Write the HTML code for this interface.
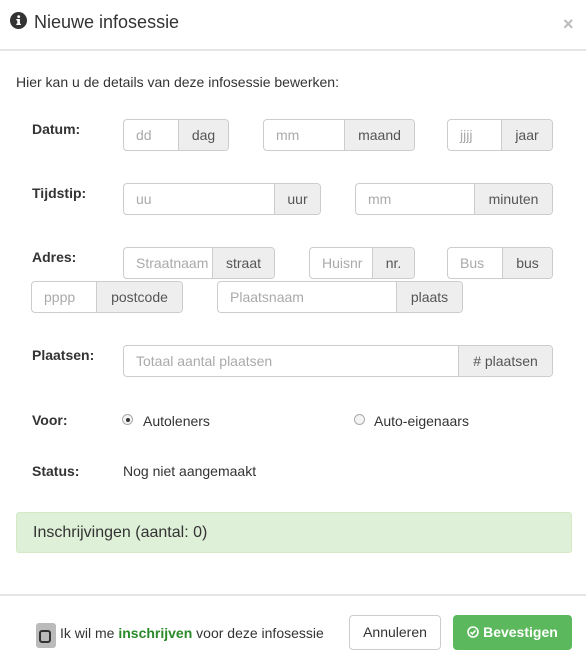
<!DOCTYPE html>
<html><head><style>
*{box-sizing:border-box;margin:0;padding:0}
body{width:586px;height:668px;background:#fff;font-family:"Liberation Sans",sans-serif;font-size:14px;color:#333;position:relative;overflow:hidden}
.a{position:absolute}
.in{position:absolute;height:32px;border:1px solid #ccc;border-radius:4px;display:flex;overflow:hidden}
.in .f{flex:1;padding-left:12px;line-height:30px;color:#aaa;white-space:nowrap;overflow:hidden}
.in .ad{background:#eee;border-left:1px solid #ccc;line-height:30px;text-align:center;color:#555}
.lb{position:absolute;font-weight:bold;left:32px}
.radio{position:absolute;width:11px;height:11px;border-radius:50%;border:1px solid #aaa;background:#f4f4f4}
</style></head><body>
<svg class="a" style="left:10px;top:12px" width="17" height="17" viewBox="0 0 17 17"><circle cx="8.5" cy="8.5" r="8.5" fill="#333"/><rect x="7.3" y="7" width="2.6" height="6" fill="#fff"/><rect x="6.3" y="7" width="2" height="1.4" fill="#fff"/><rect x="6.3" y="11.7" width="4.6" height="1.3" fill="#fff"/><circle cx="8.7" cy="4.6" r="1.4" fill="#fff"/></svg>
<div class="a" style="left:34px;top:12px;font-size:18px;color:#333">Nieuwe infosessie</div>
<div class="a" style="left:563px;top:14px;font-size:18px;color:#bbb;font-weight:bold">×</div>
<div class="a" style="left:0;top:49px;width:586px;height:2px;background:#e5e5e5"></div>
<div class="a" style="left:16px;top:74px">Hier kan u de details van deze infosessie bewerken:</div>

<div class="lb" style="top:121px">Datum:</div>
<div class="in" style="left:123px;top:119px;width:106px"><div class="f">dd</div><div class="ad" style="width:50px">dag</div></div>
<div class="in" style="left:263px;top:119px;width:152px"><div class="f">mm</div><div class="ad" style="width:70px">maand</div></div>
<div class="in" style="left:447px;top:119px;width:106px"><div class="f">jjjj</div><div class="ad" style="width:51px">jaar</div></div>

<div class="lb" style="top:185px">Tijdstip:</div>
<div class="in" style="left:123px;top:183px;width:198px"><div class="f">uu</div><div class="ad" style="width:46px">uur</div></div>
<div class="in" style="left:355px;top:183px;width:198px"><div class="f">mm</div><div class="ad" style="width:78px">minuten</div></div>

<div class="lb" style="top:249px">Adres:</div>
<div class="in" style="left:123px;top:247px;width:152px"><div class="f">Straatnaam</div><div class="ad" style="width:62px">straat</div></div>
<div class="in" style="left:309px;top:247px;width:106px"><div class="f">Huisnr</div><div class="ad" style="width:42px">nr.</div></div>
<div class="in" style="left:447px;top:247px;width:106px"><div class="f">Bus</div><div class="ad" style="width:50px">bus</div></div>
<div class="in" style="left:31px;top:281px;width:152px"><div class="f">pppp</div><div class="ad" style="width:86px">postcode</div></div>
<div class="in" style="left:217px;top:281px;width:246px"><div class="f">Plaatsnaam</div><div class="ad" style="width:66px">plaats</div></div>

<div class="lb" style="top:347px">Plaatsen:</div>
<div class="in" style="left:123px;top:345px;width:430px"><div class="f">Totaal aantal plaatsen</div><div class="ad" style="width:94px"># plaatsen</div></div>

<div class="lb" style="top:412px">Voor:</div>
<div class="radio" style="left:122px;top:414px"><div class="a" style="left:3px;top:3px;width:4px;height:4px;border-radius:50%;background:#333"></div></div>
<div class="a" style="left:143px;top:413px">Autoleners</div>
<div class="radio" style="left:354px;top:414px"></div>
<div class="a" style="left:374px;top:413px">Auto-eigenaars</div>

<div class="lb" style="top:463px">Status:</div>
<div class="a" style="left:123px;top:463px">Nog niet aangemaakt</div>

<div class="a" style="left:16px;top:512px;width:556px;height:41px;background:#dff0d8;border:1px solid #d6e9c6;border-radius:3px"></div>
<div class="a" style="left:33px;top:524px;font-size:16px;color:#333">Inschrijvingen (aantal: 0)</div>

<div class="a" style="left:0;top:594px;width:586px;height:2px;background:#e5e5e5"></div>
<div class="a" style="left:36px;top:623px;width:20px;height:25px;background:#bbb;border-radius:3px"><div class="a" style="left:3px;top:7px;width:12px;height:13px;border:2px solid #333;border-radius:3px"></div></div>
<div class="a" style="left:60px;top:625px">Ik wil me <b style="color:#2a8a2a">inschrijven</b> voor deze infosessie</div>
<div class="a" style="left:349px;top:615px;width:92px;height:35px;border:1px solid #ccc;border-radius:4px;text-align:center;line-height:33px;color:#333">Annuleren</div>
<div class="a" style="left:453px;top:615px;width:119px;height:35px;background:#5cb85c;border-radius:4px;text-align:center;line-height:35px;color:#fff;font-weight:bold">
<svg width="12" height="12" viewBox="0 0 12 12" style="vertical-align:-1px"><circle cx="6" cy="6" r="5" fill="none" stroke="#fff" stroke-width="1.6"/><path d="M3.5 6.2l1.8 1.7 3.2-3.4" fill="none" stroke="#fff" stroke-width="1.6"/></svg> Bevestigen</div>
</body></html>
